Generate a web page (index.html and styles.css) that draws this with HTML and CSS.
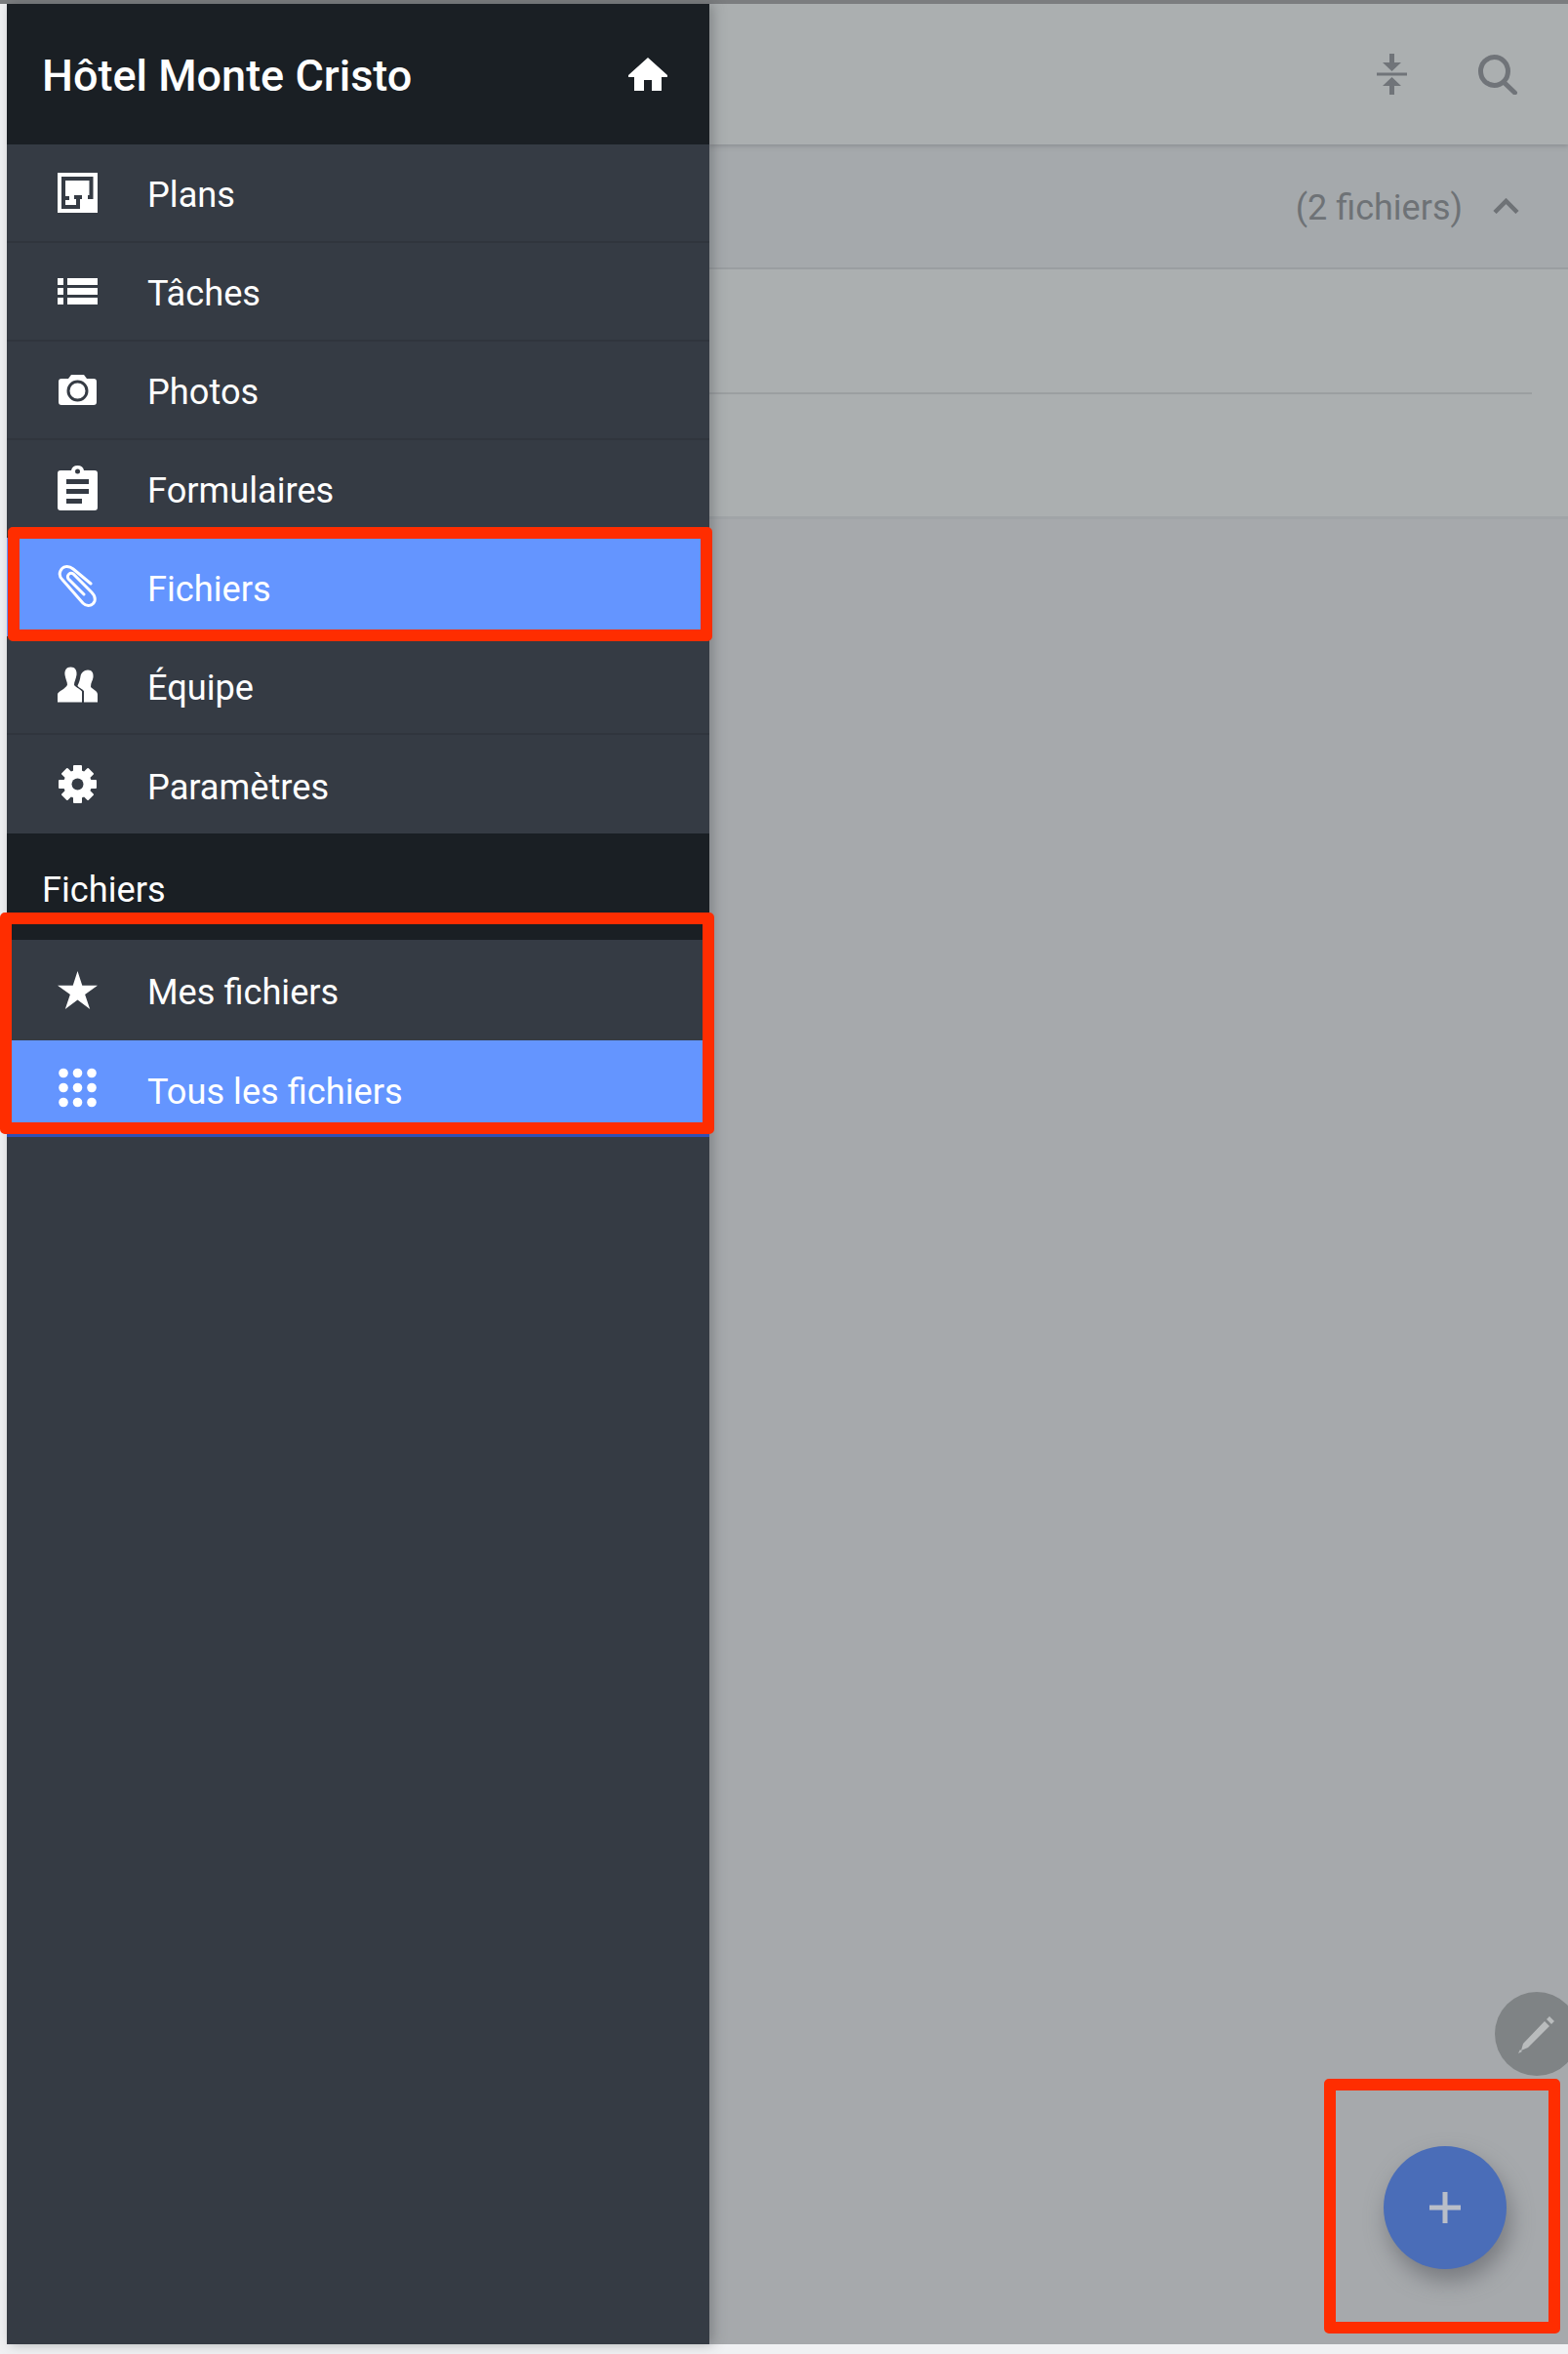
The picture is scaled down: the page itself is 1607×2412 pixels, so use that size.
FILE: index.html
```html
<!DOCTYPE html>
<html lang="fr">
<head>
    <meta charset="UTF-8">
    <meta name="viewport" content="width=device-width, initial-scale=1.0">
    <title>Hôtel Monte Cristo</title>
    <link rel="stylesheet" href="styles.css">
</head>
<body>
    <div class="topline"></div>
    <div class="app">
        <nav class="sidebar">
            <div class="side-head">
                <span class="side-title">Hôtel Monte Cristo</span>
                <svg class="home-icon" viewBox="0 0 40 34"><path d="M20 0 L40 18 V20 H34 V34 H24 V23 H16 V34 H6 V20 H0 V18 Z"/></svg>
            </div>

            <a class="nav-row">
                <svg class="nav-icon" viewBox="0 0 41 41">
                    <rect width="41" height="41"/>
                    <path class="cut-line" d="M31 25H34.5V6H6V35H21V25M17 25H25M6 26H12"/>
                </svg>
                <span>Plans</span>
            </a>
            <a class="nav-row">
                <svg class="nav-icon" viewBox="0 0 41 41">
                    <path d="M0 7H6V14H0ZM10 7H41V14H10ZM0 17H6V24H0ZM10 17H41V24H10ZM0 27H6V34H0ZM10 27H41V34H10Z"/>
                </svg>
                <span>Tâches</span>
            </a>
            <a class="nav-row">
                <svg class="nav-icon" viewBox="0 0 41 41">
                    <path d="M4 9H11L14 5H27L30 9H37Q40 9 40 12V33Q40 36 37 36H4Q1 36 1 33V12Q1 9 4 9Z"/>
                    <circle class="cut-line cut-thin" cx="20.500" cy="21.500" r="9.500"/>
                </svg>
                <span>Photos</span>
            </a>
            <a class="nav-row">
                <svg class="nav-icon clip-board" viewBox="0 0 41 46">
                    <path d="M3 5H14Q15 0 20.500 0T27 5H38Q41 5 41 8V43Q41 46 38 46H3Q0 46 0 43V8Q0 5 3 5Z"/>
                    <circle class="cut" cx="20.500" cy="6" r="2.500"/>
                    <path class="cut" d="M9 14H32V19H9ZM9 24H32V29H9ZM9 34H25V39H9Z"/>
                </svg>
                <span>Formulaires</span>
            </a>
            <a class="nav-row is-active">
                <svg class="nav-icon clip-icon" viewBox="0 0 41 44">
                    <path d="M34 19 L16 4 C11 0 5 1 3 6 C1 10 3 13 5 15 L26 39 C30 43 36 42 38 37 C39 33 37 30 35 28 L16 9 C13 7 9 10 11 14 L27 30"/>
                </svg>
                <span>Fichiers</span>
            </a>
            <a class="nav-row">
                <svg class="nav-icon" viewBox="0 0 41 36">
                    <path d="M13.500 0C18 0 20 3.500 19.500 8C19 12 17 15 17 18C17 20 23 22 25 25V36H0V28C0 25 9 22 10 18C10 15 8 12 7.500 8C7 3.500 9 0 13.500 0Z"/>
                    <path d="M31 3C35.500 3 37 6.500 36.500 10.500C36 14 34 16 34 20C34 22 41 24 41 28V36H27V24.500C25 22 21 21 20.500 19C22 16 23 13 23.500 9.500C24 6 27 3 31 3Z"/>
                </svg>
                <span>Équipe</span>
            </a>
            <a class="nav-row last-row">
                <svg class="nav-icon" viewBox="0 0 41 41">
                    <g class="gear-teeth">
                        <rect x="16" y="1" width="9" height="39" rx="1"/>
                        <rect x="16" y="1" width="9" height="39" rx="1" transform="rotate(45 20.500 20.500)"/>
                        <rect x="16" y="1" width="9" height="39" rx="1" transform="rotate(90 20.500 20.500)"/>
                        <rect x="16" y="1" width="9" height="39" rx="1" transform="rotate(135 20.500 20.500)"/>
                    </g>
                    <circle cx="20.500" cy="20.500" r="14.500"/>
                    <circle class="cut" cx="20.500" cy="20.500" r="6"/>
                </svg>
                <span>Paramètres</span>
            </a>

            <div class="side-section">Fichiers</div>

            <a class="nav-row sub-row">
                <svg class="nav-icon" viewBox="0 0 43 41"><path d="M21.500 0L26.500 15.500H43L29.500 25.200L34.800 41L21.500 31L8.200 41L13.500 25.200L0 15.500H16.500Z"/></svg>
                <span>Mes fichiers</span>
            </a>
            <a class="nav-row sub-row is-active last-sub">
                <svg class="nav-icon" viewBox="0 0 41 41">
                    <circle cx="6" cy="5.500" r="4.800"/><circle cx="20.500" cy="5.500" r="4.800"/><circle cx="35" cy="5.500" r="4.800"/>
                    <circle cx="6" cy="20.500" r="4.800"/><circle cx="20.500" cy="20.500" r="4.800"/><circle cx="35" cy="20.500" r="4.800"/>
                    <circle cx="6" cy="35.500" r="4.800"/><circle cx="20.500" cy="35.500" r="4.800"/><circle cx="35" cy="35.500" r="4.800"/>
                </svg>
                <span>Tous les fichiers</span>
            </a>
        </nav>

        <main class="content">
            <header class="topbar">
                <svg class="collapse-icon" viewBox="0 0 31 42">
                    <path d="M13 0H18V9H25L15.500 18L6 9H13ZM0 19.500H31V22.500H0ZM15.500 24L25 33H18V42H13V33H6Z"/>
                </svg>
                <svg class="search-icon" viewBox="0 0 41 41">
                    <ellipse cx="16.500" cy="17" rx="14" ry="14.500"/>
                    <path d="M26 28L37.500 39"/>
                </svg>
            </header>
            <section class="file-head">
                <span class="file-count">(2 fichiers)</span>
                <svg class="chevron-icon" viewBox="0 0 27 16"><path d="M2 14.500L13.500 3L25 14.500"/></svg>
            </section>
            <div class="file-row"><div class="file-row-line"></div></div>
            <div class="file-row file-row-end"></div>
        </main>
    </div>

    <div class="mark mark-nav"></div>
    <div class="mark mark-sub"></div>
    <div class="mark mark-fab"></div>

    <button class="edit-btn">
        <svg viewBox="0 0 40 40"><path d="M33 2L38 7L35 10L30 5ZM28 7L33 12L11 34L4 37L6 30ZM3 36L5 38L1 40Z"/></svg>
    </button>
    <button class="fab">
        <svg viewBox="0 0 32 32"><path d="M13.500 0H18.500V13.500H32V18.500H18.500V32H13.500V18.500H0V13.500H13.500Z"/></svg>
    </button>
</body>
</html>
```

FILE: styles.css
```css
* {
    box-sizing: border-box;
}
body {
    position: relative;
    margin: 0;
    width: 1607px;
    height: 2412px;
    overflow: hidden;
    background: #f0f1f3;
    font-family: Roboto, "Liberation Sans", sans-serif;
}
.topline {
    height: 4px;
    background: #7c7e80;
}
.app {
    display: flex;
    height: 2398px;
    padding-left: 7px;
}

/* sidebar */
.sidebar {
    position: relative;
    z-index: 2;
    flex: none;
    width: 720px;
    background: #353b44;
    color: #fff;
    box-shadow: 4px 0 12px rgba(60, 62, 66, 0.35);
}
.side-head {
    display: flex;
    align-items: center;
    justify-content: space-between;
    height: 144px;
    padding: 0 43px 0 36px;
    background: #1a1f24;
}
.side-title {
    padding-top: 3px;
    font-size: 45px;
    font-weight: 500;
    line-height: 1;
}
.home-icon {
    width: 40px;
    height: 34px;
    fill: #fff;
}
.nav-row {
    display: flex;
    align-items: center;
    height: 100.86px;
    padding-left: 52px;
    border-bottom: 2px solid #30353d;
    font-size: 36.2px;
}
.nav-row span {
    margin-left: 51px;
    padding-top: 5px;
}
.nav-icon {
    flex: none;
    width: 41px;
    height: 41px;
    fill: #fff;
}
.clip-board {
    height: 46px;
}
.nav-row.is-active {
    background: #6495ff;
    border-bottom-color: #6495ff;
}
.last-row {
    border-bottom: none;
}
.cut-line {
    fill: none;
    stroke: #353b44;
    stroke-width: 4;
}
.cut-thin {
    stroke-width: 3;
}
.cut {
    fill: #353b44;
}
.clip-icon {
    height: 44px;
}
.clip-icon path {
    fill: none;
    stroke: #fff;
    stroke-width: 3;
    stroke-linecap: round;
}
.side-section {
    height: 109px;
    padding: 36px 0 0 36px;
    background: #1a1f24;
    font-size: 36.2px;
    line-height: 44px;
}
.sub-row {
    height: 103px;
    border-bottom: none;
}
.sub-row span {
    padding-top: 3px;
}
.nav-row.last-sub {
    height: 99px;
    border-bottom: 3px solid #2f50b4;
}
.last-sub span {
    padding-top: 8px;
}

/* dimmed page behind the sidebar */
.content {
    flex: 1;
    display: flex;
    flex-direction: column;
    background: #a6a9ac;
}
.topbar {
    position: relative;
    z-index: 1;
    display: flex;
    align-items: center;
    justify-content: flex-end;
    height: 144px;
    padding-right: 51px;
    background: #abafb0;
    box-shadow: 0 2px 4px rgba(120, 122, 126, 0.5);
}
.collapse-icon {
    width: 31px;
    height: 42px;
    margin-right: 73px;
    fill: #707479;
}
.search-icon {
    width: 41px;
    height: 41px;
    fill: none;
    stroke: #707479;
    stroke-width: 5;
    stroke-linecap: round;
}
.file-head {
    display: flex;
    align-items: center;
    justify-content: flex-end;
    height: 128px;
    padding-right: 50px;
    background: #a5a9ac;
    border-bottom: 2px solid #9a9ea1;
}
.file-count {
    padding-top: 4px;
    color: #6e7276;
    font-size: 36px;
}
.chevron-icon {
    width: 27px;
    height: 16px;
    margin-left: 31px;
    fill: none;
    stroke: #6e7276;
    stroke-width: 4.500;
}
.file-row {
    height: 128px;
    padding-right: 37px;
    background: #abafb0;
}
.file-row-line {
    height: 128px;
    border-bottom: 2px solid #9b9fa1;
}
.file-row-end {
    border-bottom: 3px solid #a0a4a7;
}

/* red marks on the screenshot */
.mark {
    position: absolute;
    z-index: 3;
    border: 12px solid #ff2d00;
    border-radius: 5px;
}
.mark-nav {
    left: 8px;
    top: 540px;
    width: 722px;
    height: 117px;
}
.mark-sub {
    left: 0;
    top: 935px;
    width: 732px;
    height: 227px;
}
.mark-fab {
    left: 1357px;
    top: 2130px;
    width: 242px;
    height: 261px;
}

/* round buttons */
.edit-btn,
.fab {
    position: absolute;
    display: flex;
    align-items: center;
    justify-content: center;
    padding: 0;
    border: none;
    border-radius: 50%;
}
.edit-btn {
    left: 1532px;
    top: 2041px;
    width: 86px;
    height: 86px;
    background: #7f8385;
}
.edit-btn svg {
    flex: none;
    width: 40px;
    height: 40px;
    fill: #b9bcbd;
}
.fab {
    left: 1418px;
    top: 2199px;
    width: 126px;
    height: 126px;
    background: #4a6db8;
    box-shadow: 4px 12px 22px rgba(90, 92, 98, 0.6);
}
.fab svg {
    width: 32px;
    height: 32px;
    fill: #b9bec8;
}
```
